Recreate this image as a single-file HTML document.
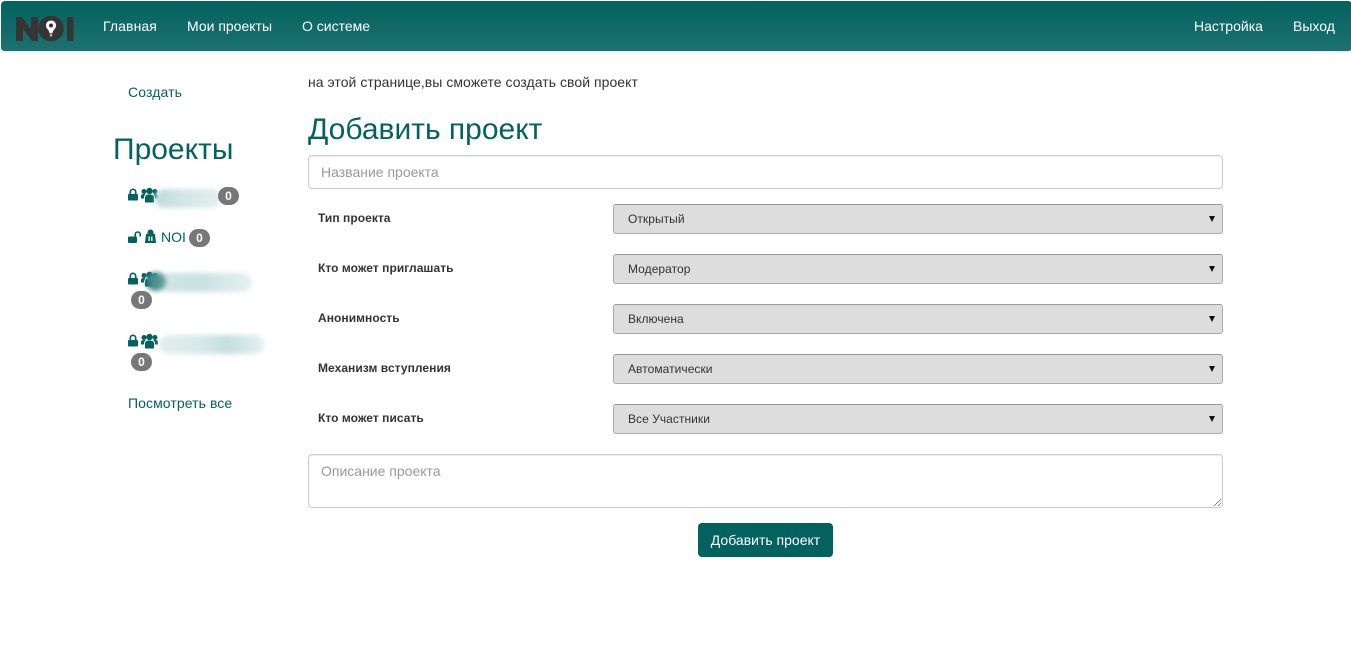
<!DOCTYPE html>
<html lang="ru">
<head>
<meta charset="utf-8">
<title>Добавить проект</title>
<style>
*{box-sizing:border-box}
html,body{margin:0;padding:0;width:1351px;height:663px;overflow:hidden;background:#fff}
body{font-family:"Liberation Sans",Arial,sans-serif;font-size:14px;color:#333;position:relative}
.abs{position:absolute;white-space:nowrap}
.nav{position:absolute;left:1px;top:1px;width:1351px;height:51px;border-radius:4px;background:linear-gradient(to bottom,#03625f,#1d716f);border-bottom:1px solid #d5eeee}
.nl{position:absolute;top:18px;color:#fff;font-size:14px;line-height:16px;white-space:nowrap}
.link{color:#03625f}
.h{color:#03625f;font-size:30px;line-height:33px;font-weight:400}
.input{position:absolute;left:308px;width:915px;background:#fff;border:1px solid #ccc;border-radius:4px;box-shadow:inset 0 1px 1px rgba(0,0,0,.075);color:#999;padding:0 12px;font-size:14px}
.lbl{position:absolute;left:318px;font-size:12px;font-weight:700;line-height:14px;color:#333;white-space:nowrap;letter-spacing:.05px}
.sel{position:absolute;left:613px;width:610px;height:30px;background:#ddd;border:1px solid #aaa;border-top-color:#999;border-radius:3px;font-size:12px;line-height:28px;padding-left:14px;color:#333;letter-spacing:.05px}
.sel:after{content:"";position:absolute;right:7px;top:11px;border-left:3px solid transparent;border-right:3px solid transparent;border-top:6px solid #111}
.badge{position:absolute;width:21px;height:18px;border-radius:10px;background:#777;color:#fff;font-size:12px;font-weight:700;line-height:18px;text-align:center}
.smudge{position:absolute;border-radius:10px;filter:blur(2.500px)}
svg{position:absolute;display:block}
.btn{position:absolute;left:698px;top:523px;width:135px;height:34px;border-radius:4px;background:#03625f;color:#fff;font-size:14px;line-height:34px;text-align:center}
</style>
</head>
<body>
<div class="nav"></div>
<svg style="left:15px;top:14px" width="60" height="29" viewBox="0 0 60 29">
<path d="M1 3h6l9 12V3h7v24h-6L8 15v12H1z" fill="#353535"/>
<circle cx="36" cy="14.500" r="12.800" fill="#353535"/>
<rect x="52" y="3" width="6.500" height="24" fill="#353535"/>
<path d="M36 6.500a5 5 0 0 1 3.600 8.500c-1.200 1.200-1.800 2.500-2 4h-3.200c-.2-1.500-.8-2.800-2-4A5 5 0 0 1 36 6.500z" fill="#fff"/>
<circle cx="36" cy="11.500" r="2" fill="#353535"/>
<rect x="34.700" y="19.500" width="2.600" height="3" fill="#aaa"/>
</svg>
<div class="nl" style="left:103px;letter-spacing:.1px">Главная</div>
<div class="nl" style="left:187px">Мои проекты</div>
<div class="nl" style="left:302px">О системе</div>
<div class="nl" style="left:1194px">Настройка</div>
<div class="nl" style="left:1293px">Выход</div>

<div class="abs link" style="left:128px;top:84px;line-height:16px;letter-spacing:.12px">Создать</div>
<div class="abs h" style="left:113px;top:133px">Проекты</div>

<svg style="left:128px;top:188px" width="10" height="13" viewBox="0 0 10 13"><path d="M2.300 6V4a2.700 2.700 0 0 1 5.400 0V6" fill="none" stroke="#03625f" stroke-width="1.700"/><rect x="0" y="6" width="10" height="6.500" rx="1" fill="#03625f"/></svg>
<svg style="left:141px;top:187px" width="17" height="16" viewBox="0 0 17 16"><g fill="#03625f"><circle cx="8.500" cy="4" r="3.200"/><circle cx="3" cy="4.500" r="2.500"/><circle cx="14" cy="4.500" r="2.500"/><path d="M4 15.500V10.500C4 8.300 6 7.500 8.500 7.500s4.500 .8 4.500 3v5z"/><path d="M0 11.500V9c0-1.300 1.200-2 3-2 .8 0 1.300 .1 1.800 .4C3.700 8 3 9 3 10.500v1z"/><path d="M17 11.500V9c0-1.300-1.200-2-3-2-.8 0-1.300 .1-1.800 .4 1.100 .6 1.800 1.600 1.800 3.100v1z"/></g></svg>
<div class="smudge" style="left:155px;top:189px;width:66px;height:19px;background:linear-gradient(to right,#bcdada,#cfe5e4 35%,#e4f0f0)"></div>
<div class="badge" style="left:218px;top:187px">0</div>

<svg style="left:128px;top:231px" width="13" height="12" viewBox="0 0 13 12"><path d="M7.200 5.500V3.500a2.500 2.500 0 0 1 5 0V5.500" fill="none" stroke="#03625f" stroke-width="1.600"/><rect x="0" y="5.500" width="9" height="6.500" rx="1" fill="#03625f"/></svg>
<svg style="left:145px;top:229px" width="11" height="14" viewBox="0 0 11 14"><path d="M2.500 3.500a3 3 0 0 1 6 0V5H10l1 9H0l1-9h1.500z" fill="#03625f"/><rect x="3.500" y="7.500" width="1.300" height="4.500" fill="#fff"/><rect x="6.200" y="7.500" width="1.300" height="4.500" fill="#fff"/></svg>
<div class="abs link" style="left:161px;top:229px;line-height:16px">NOI</div>
<div class="badge" style="left:189px;top:229px">0</div>

<svg style="left:128px;top:272px" width="10" height="13" viewBox="0 0 10 13"><path d="M2.300 6V4a2.700 2.700 0 0 1 5.400 0V6" fill="none" stroke="#03625f" stroke-width="1.700"/><rect x="0" y="6" width="10" height="6.500" rx="1" fill="#03625f"/></svg>
<svg style="left:141px;top:271px" width="17" height="16" viewBox="0 0 17 16"><g fill="#03625f"><circle cx="8.500" cy="4" r="3.200"/><circle cx="3" cy="4.500" r="2.500"/><circle cx="14" cy="4.500" r="2.500"/><path d="M4 15.500V10.500C4 8.300 6 7.500 8.500 7.500s4.500 .8 4.500 3v5z"/><path d="M0 11.500V9c0-1.300 1.200-2 3-2 .8 0 1.300 .1 1.800 .4C3.700 8 3 9 3 10.500v1z"/><path d="M17 11.500V9c0-1.300-1.200-2-3-2-.8 0-1.300 .1-1.800 .4 1.100 .6 1.800 1.600 1.800 3.100v1z"/></g></svg>
<div class="smudge" style="left:158px;top:273px;width:94px;height:19px;background:linear-gradient(to right,#d2e7e6,#c9e1e0 45%,#e6f1f1)"></div>
<div class="smudge" style="left:146px;top:272px;width:20px;height:19px;background:linear-gradient(to right,#2f7f7d,#6aa5a3)"></div>
<div class="badge" style="left:131px;top:291px">0</div>

<svg style="left:128px;top:334px" width="10" height="13" viewBox="0 0 10 13"><path d="M2.300 6V4a2.700 2.700 0 0 1 5.400 0V6" fill="none" stroke="#03625f" stroke-width="1.700"/><rect x="0" y="6" width="10" height="6.500" rx="1" fill="#03625f"/></svg>
<svg style="left:141px;top:333px" width="17" height="16" viewBox="0 0 17 16"><g fill="#03625f"><circle cx="8.500" cy="4" r="3.200"/><circle cx="3" cy="4.500" r="2.500"/><circle cx="14" cy="4.500" r="2.500"/><path d="M4 15.500V10.500C4 8.300 6 7.500 8.500 7.500s4.500 .8 4.500 3v5z"/><path d="M0 11.500V9c0-1.300 1.200-2 3-2 .8 0 1.300 .1 1.800 .4C3.700 8 3 9 3 10.500v1z"/><path d="M17 11.500V9c0-1.300-1.200-2-3-2-.8 0-1.300 .1-1.800 .4 1.100 .6 1.800 1.600 1.800 3.100v1z"/></g></svg>
<div class="smudge" style="left:159px;top:335px;width:105px;height:19px;background:linear-gradient(to right,#e2efee,#d6e9e8 40%,#c5dfde 65%,#e4f0f0)"></div>
<div class="badge" style="left:131px;top:353px">0</div>

<div class="abs link" style="left:128px;top:395px;line-height:16px;letter-spacing:.08px">Посмотреть все</div>

<div class="abs" style="left:308px;top:74px;line-height:16px;letter-spacing:.043px">на этой странице,вы сможете создать свой проект</div>
<div class="abs h" style="left:308px;top:113px;font-size:30px">Добавить проект</div>

<div class="input" style="top:155px;height:34px;line-height:32px">Название проекта</div>

<div class="lbl" style="top:211px">Тип проекта</div>
<div class="sel" style="top:204px">Открытый</div>
<div class="lbl" style="top:261px">Кто может приглашать</div>
<div class="sel" style="top:254px">Модератор</div>
<div class="lbl" style="top:311px">Анонимность</div>
<div class="sel" style="top:304px">Включена</div>
<div class="lbl" style="top:361px">Механизм вступления</div>
<div class="sel" style="top:354px">Автоматически</div>
<div class="lbl" style="top:411px">Кто может писать</div>
<div class="sel" style="top:404px">Все Участники</div>

<div class="input" style="top:454px;height:54px;line-height:16px;padding-top:8px">Описание проекта</div>
<svg style="left:1213px;top:498px" width="9" height="9" viewBox="0 0 9 9"><path d="M1 8L8 1M5 8L8 5" stroke="#666" stroke-width="1" stroke-dasharray="1 .5" fill="none"/></svg>

<div class="btn">Добавить проект</div>
</body>
</html>
